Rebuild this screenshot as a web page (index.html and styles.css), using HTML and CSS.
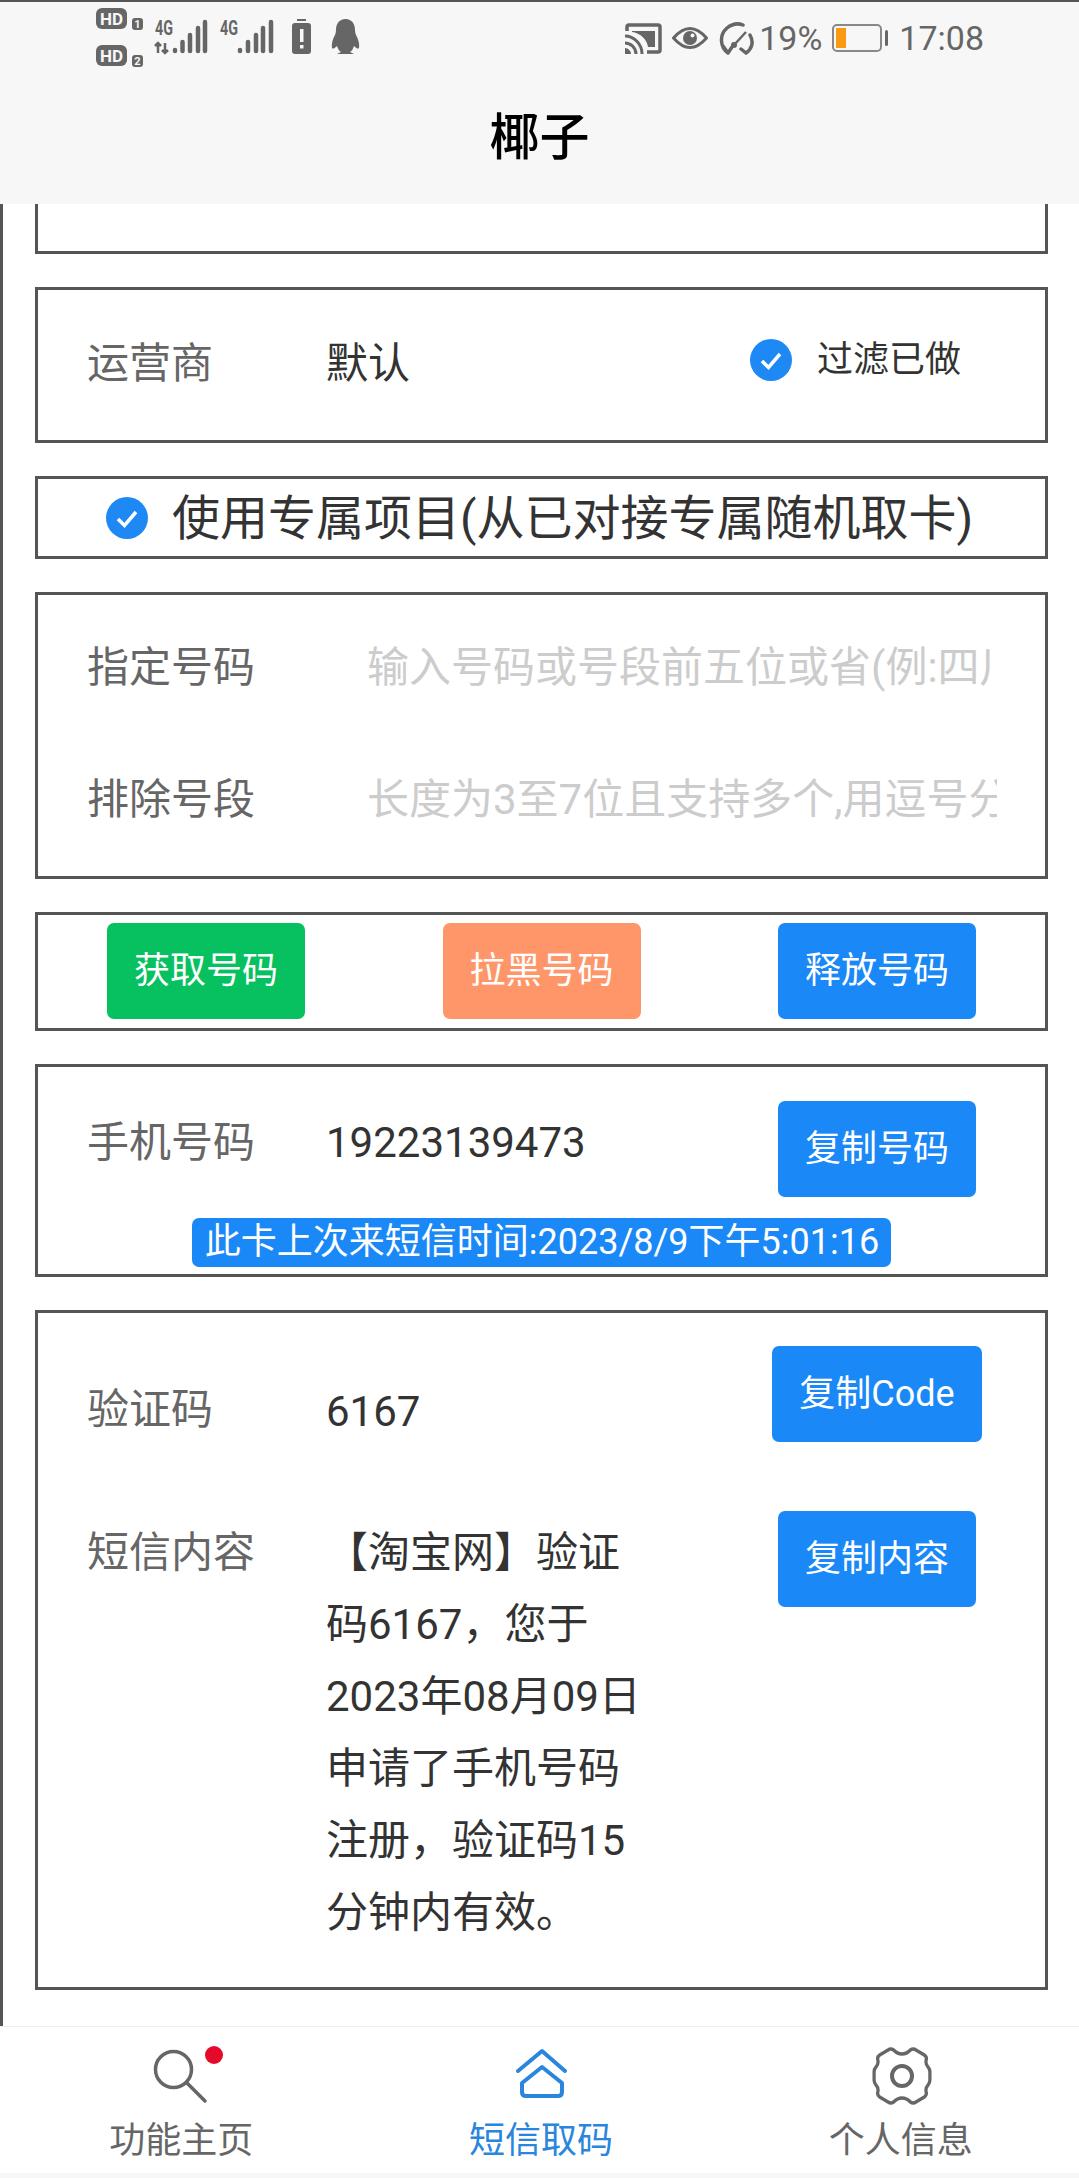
FILE: index.html
```html
<!DOCTYPE html>
<html lang="zh-CN">

<head>
    <meta charset="UTF-8">
    <meta name="viewport" content="width=device-width, initial-scale=1.0">
    <title>椰子</title>
    <link rel="stylesheet" href="styles.css">
</head>

<body>
    <header class="header">
        <div class="status-bar">
            <svg class="status-left" width="264" height="60" viewBox="0 0 264 60">
                <!-- dual sim badges -->
                <rect x="0" y="0" width="31" height="21" rx="6" fill="#666" />
                <text x="15.5" y="16.5" class="hd-text" text-anchor="middle">HD</text>
                <rect x="36" y="10" width="11" height="12" rx="3" fill="#666" />
                <text x="41.5" y="20" class="sim-text" text-anchor="middle">1</text>
                <rect x="0" y="37" width="31" height="21" rx="6" fill="#666" />
                <text x="15.5" y="53.5" class="hd-text" text-anchor="middle">HD</text>
                <rect x="36" y="47" width="11" height="12" rx="3" fill="#666" />
                <text x="41.5" y="57" class="sim-text" text-anchor="middle">2</text>

                <!-- signal 1 -->
                <text x="59" y="27" class="net-text" textLength="18" lengthAdjust="spacingAndGlyphs">4G</text>
                <path d="M62 45V35M59 38l3-3 3 3M69 35v10M66 42l3 3 3-3" fill="none" stroke="#666" stroke-width="2.500" />
                <g stroke="#666" stroke-width="4.5" stroke-linecap="round">
                    <path d="M79 42v1M86.5 34v9M94 27v16M102 20v23M109 14v29" />
                </g>

                <!-- signal 2 -->
                <text x="124" y="27" class="net-text" textLength="18" lengthAdjust="spacingAndGlyphs">4G</text>
                <g stroke="#666" stroke-width="4.5" stroke-linecap="round">
                    <path d="M144 42v1M152 34v9M160 27v16M167 20v23M175 14v29" />
                </g>

                <!-- battery alert -->
                <rect x="201" y="11" width="9" height="2" fill="#666" />
                <rect x="196" y="15" width="19" height="31" rx="3" fill="#666" />
                <rect x="204" y="21" width="3.5" height="13" fill="#f7f7f7" />
                <rect x="204" y="37" width="3.5" height="3.5" fill="#f7f7f7" />

                <!-- penguin -->
                <path d="M249.5 11C243 11 240 16 240 22C240 25 239 27 238 29C236 33 235.5 37 236 40C237 41.5 239 40 241 38C242 41 243 43 245 44L241 46H258L254 44C256 43 257 41 258 38C260 40 262 41.5 263 40C263.5 37 263 33 261 29C260 27 259 25 259 22C259 16 256 11 249.5 11Z" fill="#666" />
            </svg>

            <div class="status-right">
                <svg width="37" height="31" viewBox="0 0 37 31">
                    <path d="M2 8V4Q2 2 4 2H33Q35 2 35 4V27Q35 29 33 29H22" fill="none" stroke="#666" stroke-width="3.5" />
                    <path d="M7 8H30V24H23C22 16 15 10 7 9Z" fill="#666" />
                    <path d="M0 13C9 13 17 21 17 31M0 20C6 20 11 25 11 31" fill="none" stroke="#666" stroke-width="3" />
                    <path d="M0 25C3 25 6 28 6 31H0Z" fill="#666" />
                </svg>
                <svg class="gap-eye" width="36" height="24" viewBox="0 0 36 24">
                    <path d="M1.5 12Q18 -7 34.500 12Q18 31 1.500 12Z" fill="none" stroke="#666" stroke-width="3" />
                    <circle cx="18" cy="12" r="7" fill="#666" />
                    <circle cx="20.500" cy="9.500" r="2" fill="#f7f7f7" />
                </svg>
                <svg class="gap-gauge" width="38" height="33" viewBox="0 0 38 33">
                    <path d="M10 31C2 25 1 13 9 6C14 2 20 1 25 3M5 24L10 31L14 25" fill="none" stroke="#666" stroke-width="3.500" stroke-linecap="round" stroke-linejoin="round" />
                    <path d="M32 13C36 20 34 27 28 31M23 27L28 31" fill="none" stroke="#666" stroke-width="3.500" stroke-linecap="round" />
                    <path d="M16 23L28 10" stroke="#666" stroke-width="2.500" />
                    <circle cx="16" cy="23" r="3" fill="#666" />
                </svg>
                <span class="status-text gap-percent">19%</span>
                <svg class="gap-battery" width="56" height="28" viewBox="0 0 56 28">
                    <rect x="1" y="1" width="48" height="26" rx="4" fill="none" stroke="#888" stroke-width="2" />
                    <rect x="4" y="4" width="10" height="20" fill="#f99a12" />
                    <rect x="53" y="6" width="3" height="16" rx="1.500" fill="#666" />
                </svg>
                <span class="status-text gap-time">17:08</span>
            </div>
        </div>
        <h1 class="title">椰子</h1>
    </header>

    <main class="main">
        <div class="card card-cut"></div>

        <div class="card card-carrier">
            <div class="row">
                <div class="label">运营商</div>
                <div class="value">默认</div>
                <div class="check-group">
                    <svg width="42" height="42" viewBox="0 0 42 42">
                        <circle cx="21" cy="21" r="21" fill="#1e88f5" />
                        <path d="M12 22L18.500 28.500L30 15" fill="none" stroke="#fff" stroke-width="3.500" />
                    </svg>
                    <span>过滤已做</span>
                </div>
            </div>
        </div>

        <div class="card card-project">
            <svg width="42" height="42" viewBox="0 0 42 42">
                <circle cx="21" cy="21" r="21" fill="#1e88f5" />
                <path d="M12 22L18.500 28.500L30 15" fill="none" stroke="#fff" stroke-width="3.500" />
            </svg>
            <span class="project-text">使用专属项目(从已对接专属随机取卡)</span>
        </div>

        <div class="card card-inputs">
            <div class="row">
                <div class="label">指定号码</div>
                <div class="placeholder">输入号码或号段前五位或省(例:四川)</div>
            </div>
            <div class="row row-next">
                <div class="label">排除号段</div>
                <div class="placeholder">长度为3至7位且支持多个,用逗号分隔</div>
            </div>
        </div>

        <div class="card card-actions">
            <button class="btn btn-green">获取号码</button>
            <button class="btn btn-orange">拉黑号码</button>
            <button class="btn">释放号码</button>
        </div>

        <div class="card card-phone">
            <div class="row">
                <div class="label label-low">手机号码</div>
                <div class="value value-low">19223139473</div>
                <div class="btn-cell"><button class="btn">复制号码</button></div>
            </div>
            <div class="banner">此卡上次来短信时间:2023/8/9下午5:01:16</div>
        </div>

        <div class="card card-sms">
            <div class="row">
                <div class="label label-code">验证码</div>
                <div class="value value-code">6167</div>
                <div class="btn-cell"><button class="btn btn-wide">复制Code</button></div>
            </div>
            <div class="row row-msg">
                <div class="label label-low">短信内容</div>
                <div class="value value-low sms-text">【淘宝网】验证码6167，您于2023年08月09日申请了手机号码注册，验证码15分钟内有效。</div>
                <div class="btn-cell"><button class="btn">复制内容</button></div>
            </div>
        </div>
    </main>

    <nav class="tabbar">
        <div class="tab">
            <div class="tab-icon">
                <svg width="80" height="60" viewBox="0 0 80 60" fill="none" stroke="#666" stroke-width="3.500">
                    <circle cx="33.500" cy="22.500" r="18" />
                    <path d="M47 36L65 54" stroke-linecap="round" />
                </svg>
                <span class="dot"></span>
            </div>
            <span class="tab-text">功能主页</span>
        </div>
        <div class="tab tab-active">
            <div class="tab-icon">
                <svg width="80" height="60" viewBox="0 0 80 60" fill="none" stroke="#2a86dc" stroke-width="4" stroke-linecap="round" stroke-linejoin="round">
                    <path d="M18 24L42 4L65 24" />
                    <path d="M42 20L62 36V45Q62 49 58 49H26Q22 49 22 45V36Z" />
                </svg>
            </div>
            <span class="tab-text">短信取码</span>
        </div>
        <div class="tab">
            <div class="tab-icon">
                <svg width="80" height="60" viewBox="0 0 80 60" fill="none" stroke="#666" stroke-width="3.500">
                    <path transform="translate(43 0) scale(.93 1) translate(-43 0)" d="M43 7Q38 7 34 3Q31 1 28 3L19 8Q16 10 17 13Q18 17 15 20Q13 22 13 25V33Q13 36 15 38Q18 41 17 45Q16 48 19 50L28 55Q31 57 34 55Q38 51 43 51Q48 51 52 55Q55 57 58 55L67 50Q70 48 69 45Q68 41 71 38Q73 36 73 33V25Q73 22 71 20Q68 17 69 13Q70 10 67 8L58 3Q55 1 52 3Q48 7 43 7Z" />
                    <circle cx="43" cy="29" r="10" stroke-width="4" />
                </svg>
            </div>
            <span class="tab-text">个人信息</span>
        </div>
    </nav>
</body>

</html>
```

FILE: styles.css
```css
html, body {
    height: 100%;
}

body {
    margin: 0;
    display: flex;
    flex-direction: column;
    overflow: hidden;
    background: #fff;
    font-family: Roboto, "Noto Sans CJK SC", sans-serif;
    color: #333;
}

/* top bar */
.header {
    box-sizing: border-box;
    flex: none;
    height: 204px;
    padding-top: 6px;
    border-top: 2px solid #555;
    background-color: #f7f7f7;
}

.status-bar {
    display: flex;
    justify-content: space-between;
    height: 60px;
    padding: 0 95px 0 96px;
}

.status-left {
    display: block;
}

.status-right {
    display: flex;
    align-items: center;
}

.hd-text {
    font-size: 17px;
    font-weight: 700;
    fill: #f7f7f7;
}

.sim-text {
    font-size: 11px;
    font-weight: 700;
    fill: #f7f7f7;
}

.net-text {
    font-size: 20px;
    font-weight: 700;
    fill: #666;
}

.status-text {
    font-size: 34px;
    line-height: 40px;
    color: #666;
}

.gap-eye {
    margin-left: 10px;
}

.gap-gauge {
    margin-left: 10px;
}

.gap-percent {
    margin-left: 3px;
}

.gap-battery {
    margin-left: 10px;
}

.gap-time {
    margin-left: 11px;
}

.title {
    margin: 0;
    padding-top: 4px;
    font-size: 50px;
    font-weight: 500;
    line-height: 132px;
    text-align: center;
    color: #000;
}

/* content */
.main {
    box-sizing: border-box;
    flex: none;
    height: 1822px;
    padding-left: 32px;
    border-left: 3px solid #555;
    overflow: hidden;
}

.card {
    box-sizing: border-box;
    width: 1013px;
    margin-top: 33px;
    border: 3px solid #555;
    background: #fff;
}

.card-cut {
    height: 50px;
    margin-top: 0;
    border-top: none;
}

.row {
    display: flex;
    align-items: flex-start;
    padding: 0 63px 0 49px;
}

.row-next {
    margin-top: 60px;
}

.row-msg {
    margin-top: 63px;
}

.label {
    flex: none;
    width: 239px;
    font-size: 42px;
    line-height: 72px;
    color: #666;
}

.value {
    font-size: 42px;
    line-height: 72px;
    color: #333;
}

.label-low,
.value-low {
    margin-top: 6px;
}

.label-code {
    margin-top: 28px;
}

.value-code {
    margin-top: 30px;
}

.card-carrier {
    height: 156px;
    padding-top: 38px;
}

.check-group {
    display: flex;
    align-items: center;
    gap: 25px;
    margin: 0 21px 0 auto;
    align-self: center;
    position: relative;
    top: -4px;
    font-size: 36px;
    line-height: 50px;
}

.card-project {
    display: flex;
    align-items: center;
    gap: 24px;
    height: 83px;
    padding: 1px 0 0 68px;
    font-size: 48px;
    white-space: nowrap;
}

.project-text {
    padding-bottom: 8px;
}

.card-inputs {
    padding: 37px 0 40px;
}

.placeholder {
    flex: none;
    width: 630px;
    margin-left: 41px;
    overflow: hidden;
    white-space: nowrap;
    font-size: 42px;
    line-height: 72px;
    color: #ccc;
}

.card-actions {
    display: flex;
    justify-content: space-between;
    padding: 8px 69px 9px 69px;
}

.btn {
    box-sizing: border-box;
    width: 198px;
    height: 96px;
    padding: 0 0 8px;
    border: none;
    border-radius: 7px;
    background-color: #1b88f8;
    color: #fff;
    font-family: inherit;
    font-size: 36px;
}

.btn-green {
    background-color: #07c160;
}

.btn-orange {
    background-color: #ff9669;
}

.btn-wide {
    width: 210px;
}

.btn-cell {
    display: flex;
    justify-content: center;
    flex: none;
    width: 210px;
    margin-left: auto;
}

.card-phone {
    padding: 34px 0 7px;
}

.banner {
    width: fit-content;
    margin: 21px auto 0;
    padding: 0 12px 0 13px;
    border-radius: 7px;
    background-color: #1b88f8;
    color: #fff;
    font-size: 36px;
    line-height: 49px;
    white-space: nowrap;
}

.card-sms {
    padding: 33px 0 38px;
}

.sms-text {
    width: 325px;
}

/* bottom tabs */
.tabbar {
    box-sizing: border-box;
    flex: none;
    display: flex;
    height: 152px;
    padding-top: 20px;
    border-top: 1px solid #eee;
    border-bottom: 5px solid #f7f7f7;
    background: #fff;
}

.tab {
    flex: 1;
    display: flex;
    flex-direction: column;
    align-items: center;
    font-size: 36px;
    line-height: 50px;
    color: #666;
}

.tab-active {
    color: #2a86dc;
}

.tab-text {
    padding-left: 3px;
}

.tab-icon {
    position: relative;
    height: 60px;
    margin-bottom: 9px;
}

.tab-icon svg {
    display: block;
}

.dot {
    position: absolute;
    left: 65px;
    top: -1px;
    width: 18px;
    height: 18px;
    border-radius: 50%;
    background-color: #e60a2a;
}
```
